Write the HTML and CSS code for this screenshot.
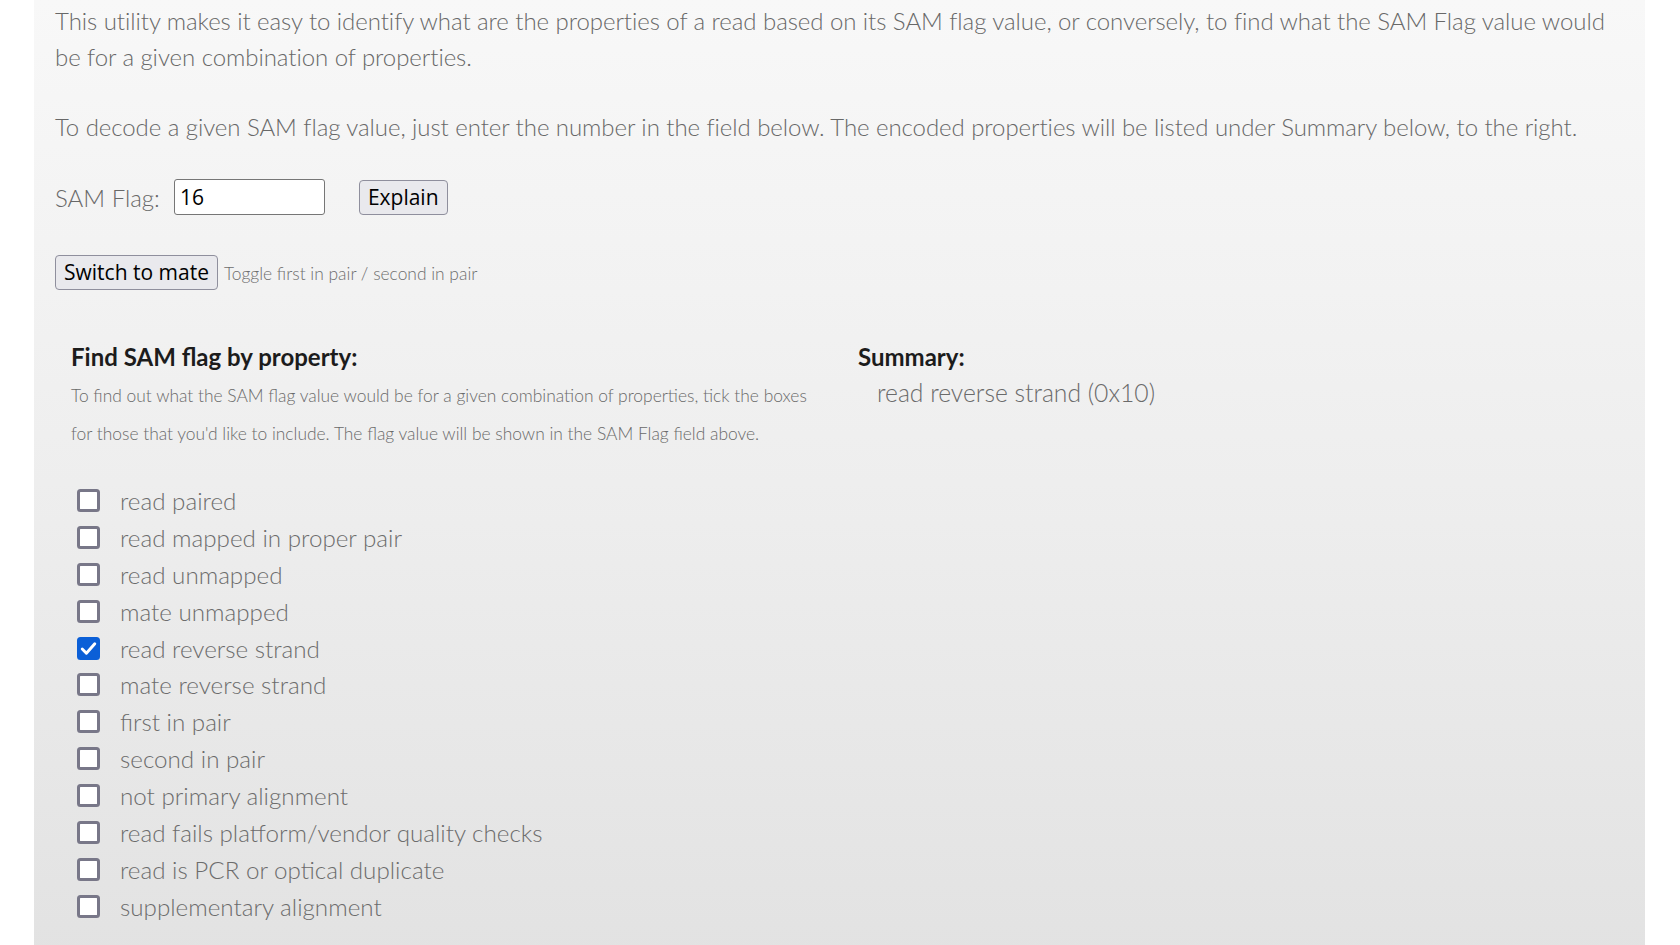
FILE: index.html
```html
<!DOCTYPE html>
<html lang="en">
<head>
<meta charset="utf-8">
<title>Decoding SAM flags</title>
<link rel="stylesheet" href="styles.css">
</head>
<body>
<main class="panel">
  <p class="intro">This utility makes it easy to identify what are the properties of a read based on its SAM flag value, or conversely, to find what the SAM Flag value would be for a given combination of properties.</p>
  <p class="intro">To decode a given SAM flag value, just enter the number in the field below. The encoded properties will be listed under Summary below, to the right.</p>

  <div class="flag-row">
    <label class="flag-label" for="flag">SAM Flag:</label>
    <input class="flag-input" id="flag" type="text" value="16">
    <button class="btn btn-explain" type="button">Explain</button>
  </div>

  <div class="mate-row">
    <button class="btn" type="button">Switch to mate</button>
    <span class="hint">Toggle first in pair / second in pair</span>
  </div>

  <div class="columns">
    <section class="col-left">
      <h3 class="col-title">Find SAM flag by property:</h3>
      <p class="desc">To find out what the SAM flag value would be for a given combination of properties, tick the boxes for those that you'd like to include. The flag value will be shown in the SAM Flag field above.</p>
      <ul class="opts">
        <li><label class="opt"><span class="box"><input type="checkbox"><svg class="tick" viewBox="0 0 22 22"><polyline points="5,11.5 9,15.5 17,6.5"/></svg></span>read paired</label></li>
        <li><label class="opt"><span class="box"><input type="checkbox"><svg class="tick" viewBox="0 0 22 22"><polyline points="5,11.5 9,15.5 17,6.5"/></svg></span>read mapped in proper pair</label></li>
        <li><label class="opt"><span class="box"><input type="checkbox"><svg class="tick" viewBox="0 0 22 22"><polyline points="5,11.5 9,15.5 17,6.5"/></svg></span>read unmapped</label></li>
        <li><label class="opt"><span class="box"><input type="checkbox"><svg class="tick" viewBox="0 0 22 22"><polyline points="5,11.5 9,15.5 17,6.5"/></svg></span>mate unmapped</label></li>
        <li><label class="opt"><span class="box"><input type="checkbox" checked><svg class="tick" viewBox="0 0 22 22"><polyline points="5,11.5 9,15.5 17,6.5"/></svg></span>read reverse strand</label></li>
        <li><label class="opt"><span class="box"><input type="checkbox"><svg class="tick" viewBox="0 0 22 22"><polyline points="5,11.5 9,15.5 17,6.5"/></svg></span>mate reverse strand</label></li>
        <li><label class="opt"><span class="box"><input type="checkbox"><svg class="tick" viewBox="0 0 22 22"><polyline points="5,11.5 9,15.5 17,6.5"/></svg></span>first in pair</label></li>
        <li><label class="opt"><span class="box"><input type="checkbox"><svg class="tick" viewBox="0 0 22 22"><polyline points="5,11.5 9,15.5 17,6.5"/></svg></span>second in pair</label></li>
        <li><label class="opt"><span class="box"><input type="checkbox"><svg class="tick" viewBox="0 0 22 22"><polyline points="5,11.5 9,15.5 17,6.5"/></svg></span>not primary alignment</label></li>
        <li><label class="opt"><span class="box"><input type="checkbox"><svg class="tick" viewBox="0 0 22 22"><polyline points="5,11.5 9,15.5 17,6.5"/></svg></span>read fails platform/vendor quality checks</label></li>
        <li><label class="opt"><span class="box"><input type="checkbox"><svg class="tick" viewBox="0 0 22 22"><polyline points="5,11.5 9,15.5 17,6.5"/></svg></span>read is PCR or optical duplicate</label></li>
        <li><label class="opt"><span class="box"><input type="checkbox"><svg class="tick" viewBox="0 0 22 22"><polyline points="5,11.5 9,15.5 17,6.5"/></svg></span>supplementary alignment</label></li>
      </ul>
    </section>
    <section class="col-right">
      <h3 class="col-title">Summary:</h3>
      <div class="summary">read reverse strand (0x10)</div>
    </section>
  </div>
</main>
</body>
</html>
```
FILE: styles.css
```css
html, body {
  margin: 0;
  padding: 0;
  background: #ffffff;
}

body {
  font-family: Lato, "Open Sans", sans-serif;
  color: #686868;
}

.panel {
  box-sizing: border-box;
  margin-left: 34px;
  width: 1611px;
  min-height: 945px;
  padding: 3px 21px 40px;
  background: linear-gradient(to bottom, #f8f8f8 0%, #eeeeee 50%, #e2e2e2 100%);
}

.intro {
  margin: 0 0 34px;
  font-size: 24px;
  font-weight: 300;
  line-height: 36px;
  letter-spacing: -0.06px;
  color: #686868;
}

.flag-row {
  display: flex;
  align-items: center;
  height: 36px;
  margin-top: 1px;
  margin-bottom: 39px;
}

.flag-label {
  font-size: 24px;
  font-weight: 300;
  color: #686868;
  margin-right: 14px;
}

.flag-input {
  box-sizing: border-box;
  width: 151px;
  height: 36px;
  margin: 0 34px 0 0;
  padding: 0 5px;
  border: 1px solid #767676;
  border-radius: 3px;
  background: #fff;
  font-family: "Open Sans", "Noto Sans", sans-serif;
  font-size: 21px;
  color: #000;
  outline: none;
}

.btn {
  box-sizing: border-box;
  height: 35px;
  padding: 0 8px;
  border: 1px solid #8f8f9d;
  border-radius: 4px;
  background: #e9e9ed;
  font-family: "Open Sans", "Noto Sans", sans-serif;
  font-size: 21px;
  color: #000;
  line-height: 1;
}

.btn-explain {
  padding: 0 8px;
}

.mate-row {
  display: flex;
  align-items: center;
  gap: 6px;
  height: 36px;
}

.hint {
  font-size: 17.4px;
  font-weight: 300;
  color: #6e6e6e;
  margin-top: 3px;
}

.columns {
  display: grid;
  grid-template-columns: 803px 1fr;
  margin-top: 49px;
}

.col-left {
  padding: 0 40px 0 16px;
}

.col-title {
  margin: 0;
  font-size: 24px;
  font-weight: 700;
  line-height: 36px;
  color: #1c1c1c;
}

.desc {
  margin: 2px 0 0;
  font-size: 17.4px;
  font-weight: 300;
  line-height: 38px;
  color: #6a6a6a;
}

.opts {
  list-style: none;
  margin: 29px 0 0;
  padding: 0 0 0 6px;
}

.opt {
  display: flex;
  align-items: center;
  height: 36.9px;
  font-size: 24.2px;
  font-weight: 300;
  color: #6c6c6c;
}

.box {
  position: relative;
  width: 23px;
  height: 23px;
  margin-right: 20px;
  flex: none;
}

.box input {
  appearance: none;
  -webkit-appearance: none;
  box-sizing: border-box;
  display: block;
  width: 23px;
  height: 23px;
  margin: 0;
  border: 3px solid #787788;
  border-radius: 3.5px;
  background: #ffffff;
}

.box input:checked {
  background: #0b5fd7;
  border-color: #0b5fd7;
}

.tick {
  position: absolute;
  left: 0;
  top: 0;
  width: 23px;
  height: 23px;
  display: none;
  fill: none;
  stroke: #ffffff;
  stroke-width: 2.8;
  stroke-linecap: round;
  stroke-linejoin: round;
}

.box input:checked + .tick {
  display: block;
}

.summary {
  padding-left: 19px;
  font-size: 24.7px;
  font-weight: 300;
  line-height: 36px;
  color: #6a6a6a;
}
```
